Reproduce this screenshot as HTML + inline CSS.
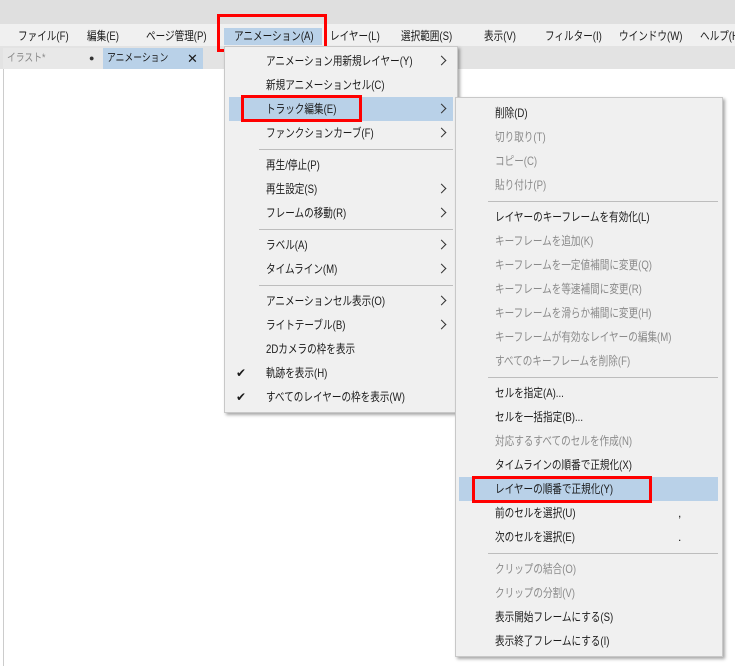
<!DOCTYPE html>
<html><head><meta charset="utf-8"><style>
*{margin:0;padding:0;box-sizing:border-box}
body{width:735px;height:666px;overflow:hidden;background:#fff;font-family:"Liberation Sans","Noto Sans CJK JP",sans-serif;font-size:12px;color:#1a1a1a;position:relative}
.a{position:absolute;white-space:nowrap}
.t{display:inline-block;transform:scaleX(0.8);transform-origin:left center}
.top{left:0;top:0;width:735px;height:24px;background:#dfdfdf}
.mb{left:0;top:24px;width:735px;height:22px;background:#f0f0f0}
.tabs{left:0;top:46px;width:735px;height:23px;background:#e3e3e3}
.menu{background:#f0f0f0;border:1px solid #c8c8c8;box-shadow:2px 2px 3px rgba(0,0,0,.35)}
.it{position:absolute;left:0;right:0;height:24px;line-height:24px;white-space:nowrap}
.g{color:#8a8a8a}
.sep{position:absolute;height:1px;background:#bdbdbd}
.arr{position:absolute;right:12px;top:8px;width:7px;height:7px;border-right:1.3px solid #333;border-top:1.3px solid #333;transform:rotate(45deg)}
.red{position:absolute;border:3px solid #f00}
</style></head><body>
<div class="a top"></div>
<div class="a mb"></div>
<div class="a" style="left:224px;top:28px;width:98px;height:17px;background:#b9d1e8"></div>
<div class="a t" style="top:27px;left:18px">ファイル(F)</div>
<div class="a t" style="top:27px;left:87px">編集(E)</div>
<div class="a t" style="top:27px;left:146px">ページ管理(P)</div>
<div class="a t" style="top:27px;left:234px">アニメーション(A)</div>
<div class="a t" style="top:27px;left:330px">レイヤー(L)</div>
<div class="a t" style="top:27px;left:401px">選択範囲(S)</div>
<div class="a t" style="top:27px;left:484px">表示(V)</div>
<div class="a t" style="top:27px;left:545px">フィルター(I)</div>
<div class="a t" style="top:27px;left:619px">ウインドウ(W)</div>
<div class="a t" style="top:27px;left:700px">ヘルプ(H)</div>
<div class="a tabs"></div>
<div class="a" style="left:3px;top:48px;width:100px;height:21px;background:#e8e8e8;color:#888;font-size:11px;line-height:21px;padding-left:4px"><span class="t">イラスト*</span><span style="position:absolute;left:86px;color:#333;font-size:9px">●</span></div>
<div class="a" style="left:103px;top:48px;width:100px;height:21px;background:#b9d1e8;font-size:11px;line-height:21px;padding-left:4px"><span class="t">アニメーション</span><span style="position:absolute;left:84px;font-size:13px">✕</span></div>
<div class="a" style="left:3px;top:69px;width:1px;height:597px;background:#ccc"></div>
<div class="red" style="left:217px;top:14px;width:110px;height:38px"></div>

<div class="a menu" style="left:224px;top:46px;width:234px;height:367px">
<div class="it" style="top:2px;padding-left:41px"><span class="t">アニメーション用新規レイヤー(Y)</span><span class="arr"></span></div>
<div class="it" style="top:26px;padding-left:41px"><span class="t">新規アニメーションセル(C)</span></div>
<div class="it" style="top:50px;left:4px;right:4px;background:#b9d1e8;padding-left:37px"><span class="t">トラック編集(E)</span><span class="arr" style="right:8px"></span></div>
<div class="it" style="top:74px;padding-left:41px"><span class="t">ファンクションカーブ(F)</span><span class="arr"></span></div>
<div class="sep" style="top:102px;left:34px;right:4px"></div>
<div class="it" style="top:106px;padding-left:41px"><span class="t">再生/停止(P)</span></div>
<div class="it" style="top:130px;padding-left:41px"><span class="t">再生設定(S)</span><span class="arr"></span></div>
<div class="it" style="top:154px;padding-left:41px"><span class="t">フレームの移動(R)</span><span class="arr"></span></div>
<div class="sep" style="top:182px;left:34px;right:4px"></div>
<div class="it" style="top:186px;padding-left:41px"><span class="t">ラベル(A)</span><span class="arr"></span></div>
<div class="it" style="top:210px;padding-left:41px"><span class="t">タイムライン(M)</span><span class="arr"></span></div>
<div class="sep" style="top:238px;left:34px;right:4px"></div>
<div class="it" style="top:242px;padding-left:41px"><span class="t">アニメーションセル表示(O)</span><span class="arr"></span></div>
<div class="it" style="top:266px;padding-left:41px"><span class="t">ライトテーブル(B)</span><span class="arr"></span></div>
<div class="it" style="top:290px;padding-left:41px"><span class="t">2Dカメラの枠を表示</span></div>
<div class="it" style="top:314px;padding-left:41px"><span style="position:absolute;left:11px">✔</span><span class="t">軌跡を表示(H)</span></div>
<div class="it" style="top:338px;padding-left:41px"><span style="position:absolute;left:11px">✔</span><span class="t">すべてのレイヤーの枠を表示(W)</span></div>
</div>
<div class="red" style="left:241px;top:95px;width:121px;height:27px"></div>

<div class="a menu" style="left:455px;top:97px;width:268px;height:560px">
<div class="it" style="top:3px;padding-left:39px"><span class="t">削除(D)</span></div>
<div class="it g" style="top:27px;padding-left:39px"><span class="t">切り取り(T)</span></div>
<div class="it g" style="top:51px;padding-left:39px"><span class="t">コピー(C)</span></div>
<div class="it g" style="top:75px;padding-left:39px"><span class="t">貼り付け(P)</span></div>
<div class="sep" style="top:103px;left:32px;right:4px"></div>
<div class="it" style="top:107px;padding-left:39px"><span class="t">レイヤーのキーフレームを有効化(L)</span></div>
<div class="it g" style="top:131px;padding-left:39px"><span class="t">キーフレームを追加(K)</span></div>
<div class="it g" style="top:155px;padding-left:39px"><span class="t">キーフレームを一定値補間に変更(Q)</span></div>
<div class="it g" style="top:179px;padding-left:39px"><span class="t">キーフレームを等速補間に変更(R)</span></div>
<div class="it g" style="top:203px;padding-left:39px"><span class="t">キーフレームを滑らか補間に変更(H)</span></div>
<div class="it g" style="top:227px;padding-left:39px"><span class="t">キーフレームが有効なレイヤーの編集(M)</span></div>
<div class="it g" style="top:251px;padding-left:39px"><span class="t">すべてのキーフレームを削除(F)</span></div>
<div class="sep" style="top:279px;left:32px;right:4px"></div>
<div class="it" style="top:283px;padding-left:39px"><span class="t">セルを指定(A)...</span></div>
<div class="it" style="top:307px;padding-left:39px"><span class="t">セルを一括指定(B)...</span></div>
<div class="it g" style="top:331px;padding-left:39px"><span class="t">対応するすべてのセルを作成(N)</span></div>
<div class="it" style="top:355px;padding-left:39px"><span class="t">タイムラインの順番で正規化(X)</span></div>
<div class="it" style="top:379px;left:3px;right:4px;background:#b9d1e8;padding-left:36px"><span class="t">レイヤーの順番で正規化(Y)</span></div>
<div class="it" style="top:403px;padding-left:39px"><span class="t">前のセルを選択(U)</span><span style="position:absolute;left:222px">,</span></div>
<div class="it" style="top:427px;padding-left:39px"><span class="t">次のセルを選択(E)</span><span style="position:absolute;left:222px">.</span></div>
<div class="sep" style="top:455px;left:32px;right:4px"></div>
<div class="it g" style="top:459px;padding-left:39px"><span class="t">クリップの結合(O)</span></div>
<div class="it g" style="top:483px;padding-left:39px"><span class="t">クリップの分割(V)</span></div>
<div class="it" style="top:507px;padding-left:39px"><span class="t">表示開始フレームにする(S)</span></div>
<div class="it" style="top:531px;padding-left:39px"><span class="t">表示終了フレームにする(I)</span></div>
</div>
<div class="red" style="left:472px;top:476px;width:180px;height:27px"></div>
</body></html>
